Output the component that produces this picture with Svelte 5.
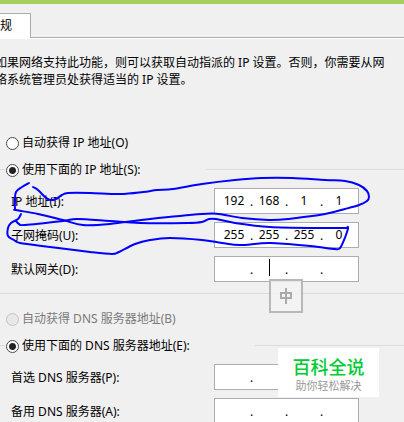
<script lang="ts">
  // TCP/IPv4 properties sheet: address and DNS groups, with pen marks drawn
  // over the address rows and the floating IME indicator.

  type Point = [number, number];

  interface AddressRow {
    id: string;
    label: string;
    octets: string[];
  }

  const addressRows: AddressRow[] = [
    { id: "ip", label: "IP 地址(I):", octets: ["192", "168", "1", "1"] },
    { id: "mask", label: "子网掩码(U):", octets: ["255", "255", "255", "0"] },
    { id: "gateway", label: "默认网关(D):", octets: ["", "", "", ""] },
  ];

  const dnsRows: AddressRow[] = [
    { id: "dns1", label: "首选 DNS 服务器(P):", octets: ["", "", "", ""] },
    { id: "dns2", label: "备用 DNS 服务器(A):", octets: ["", "", "", ""] },
  ];

  let ipMode = $state("manual");
  let dnsMode = $state("manual");

  const strokes: Point[][] = [
    [
      [29, 183], [22, 187], [16, 192], [15, 200], [15, 209], [16, 210],
      [38, 214], [63, 220], [83, 225], [110, 224], [150, 219], [202, 214],
      [219, 214], [242, 218], [269, 220], [289, 219], [312, 216], [325, 214],
      [345, 209], [359, 205], [367, 201], [369, 197], [367, 191], [359, 185],
      [345, 181], [325, 180], [292, 178], [262, 178], [235, 180], [202, 184],
      [173, 189], [157, 190], [143, 192], [120, 194], [90, 193], [68, 193],
      [62, 195], [56, 199], [50, 200], [45, 197], [38, 190], [33, 187],
    ],
    [
      [21, 214], [18, 219], [11, 223], [8, 228], [8, 236], [14, 240],
      [20, 243], [50, 247], [90, 252], [112, 254], [119, 252], [135, 244],
      [150, 240], [170, 238], [202, 240], [222, 243], [240, 245], [270, 243],
      [310, 246], [335, 249], [340, 248], [344, 240], [347, 232], [348, 227],
      [344, 228], [320, 228], [270, 227], [235, 223], [216, 219], [209, 219],
      [202, 222], [187, 223], [140, 223], [110, 221], [77, 219], [63, 221],
      [25, 225], [19, 224], [16, 221],
    ],
  ];

  // Catmull-Rom through the sampled pen points.
  function smooth(points: Point[]): string {
    let d = `M${points[0].join(" ")}`;
    for (let i = 0; i < points.length - 1; i++) {
      const a = points[i - 1] ?? points[i];
      const b = points[i];
      const c = points[i + 1];
      const e = points[i + 2] ?? c;
      d += `C${b[0] + (c[0] - a[0]) / 6} ${b[1] + (c[1] - a[1]) / 6}`;
      d += ` ${c[0] - (e[0] - b[0]) / 6} ${c[1] - (e[1] - b[1]) / 6} ${c[0]} ${c[1]}`;
    }
    return d;
  }
</script>

{#snippet addressRow(row: AddressRow)}
  <div class="row">
    <label for="{row.id}-0">{row.label}</label>
    <div class="address" role="group" aria-label={row.label}>
      {#each row.octets as octet, i}
        {#if i > 0}<span class="dot">.</span>{/if}
        <input id="{row.id}-{i}" type="text" maxlength="3" value={octet} aria-label="{row.label} {i + 1}" />
      {/each}
      {#if row.id === "gateway"}
        <span class="caret"></span>
        <span class="ime">
          <svg viewBox="0 0 30 30" aria-hidden="true">
            <path d="M10 12h10v5h-10zM15 7v16" />
          </svg>
        </span>
      {/if}
    </div>
  </div>
{/snippet}

<main>
  <div class="tabs" role="tablist">
    <button class="tab" role="tab" aria-selected="true">规</button>
  </div>

  <p class="intro">
    如果网络支持此功能，则可以获取自动指派的 IP 设置。否则，你需要从网<br />络系统管理员处获得适当的 IP 设置。
  </p>

  <section class="group">
    <label class="option">
      <input type="radio" name="ip" value="auto" bind:group={ipMode} />
      自动获得 IP 地址(O)
    </label>
    <div class="legend">
      <label class="option">
        <input type="radio" name="ip" value="manual" bind:group={ipMode} />
        使用下面的 IP 地址(S):
      </label>
    </div>
    <div class="rows">
      {#each addressRows as row (row.id)}
        {@render addressRow(row)}
      {/each}
    </div>
  </section>

  <section class="group dns">
    <label class="option disabled">
      <input type="radio" name="dns" value="auto" disabled bind:group={dnsMode} />
      自动获得 DNS 服务器地址(B)
    </label>
    <div class="legend">
      <label class="option">
        <input type="radio" name="dns" value="manual" bind:group={dnsMode} />
        使用下面的 DNS 服务器地址(E):
      </label>
    </div>
    <div class="rows">
      {#each dnsRows as row (row.id)}
        {@render addressRow(row)}
      {/each}
    </div>
  </section>

  <svg class="pen" width="404" height="422" aria-hidden="true">
    {#each strokes as points}
      <path d={smooth(points)} />
    {/each}
  </svg>

  <div class="brand">
    <strong>百科全说</strong>
    <span>助你轻松解决</span>
  </div>
</main>

<style>
  :global(body) {
    background: #f0f0f0;
    overflow: hidden;
  }
  main {
    position: relative;
    overflow: hidden;
    border-top: 4px solid #a2cf5e;
    background: #f0f0f0;
    color: #000;
    font-family: "Noto Sans", "Noto Sans CJK SC", sans-serif;
    font-size: 12px;
    line-height: 17px;
  }
  .tabs {
    display: flex;
    padding-top: 9px;
    border-bottom: 1px solid #acacac;
    box-shadow: 0 1px #fff;
  }
  .tab {
    width: 31px;
    height: 25px;
    margin-bottom: -1px;
    padding: 0 0 2px;
    border: 1px solid #acacac;
    border-width: 1px 1px 0 0;
    background: #fff;
    color: inherit;
    font: inherit;
    text-align: left;
  }
  /* The sheet runs past the left edge of the window. */
  .intro {
    margin: 16px 0 0 -5px;
    white-space: nowrap;
  }
  .group {
    padding-top: 45px;
    border-bottom: 1px solid #dcdcdc;
  }
  .dns {
    padding-top: 15px;
    border-bottom: none;
  }
  .option {
    display: flex;
    align-items: center;
    gap: 3px;
    width: max-content;
    height: 18px;
    padding-left: 6px;
    white-space: nowrap;
  }
  .option input {
    appearance: none;
    width: 13px;
    height: 13px;
    margin: 2px 0 0;
    border: 1px solid #4a4a4a;
    border-radius: 50%;
    background: #fff;
  }
  .option input:checked {
    background: radial-gradient(circle, #222 3px, #fff 4px);
  }
  .option input:disabled {
    border-color: #c3c3c3;
    background: #e8e8e8;
  }
  .disabled {
    color: #7a7a7a;
  }
  .legend {
    display: flex;
    align-items: center;
    margin-top: 9px;
  }
  .legend::before,
  .legend::after {
    content: "";
    height: 1px;
    background: #dcdcdc;
  }
  .legend::before {
    width: 5px;
  }
  .legend::after {
    flex: 1;
    margin-left: 65px;
  }
  .legend .option {
    padding-left: 1px;
  }
  .rows {
    display: flex;
    flex-direction: column;
    gap: 8px;
    padding: 10px 0 11px;
  }
  .row {
    display: grid;
    grid-template-columns: 203px 145px;
    align-items: center;
    padding-left: 11px;
  }
  .address {
    position: relative;
    display: flex;
    align-items: center;
    box-sizing: border-box;
    height: 26px;
    padding-left: 7px;
    border: 1px solid #abadb3;
    background: #fff;
  }
  .address input {
    width: 24px;
    height: 20px;
    padding: 0 0 2px;
    box-sizing: border-box;
    border: none;
    outline: none;
    background: none;
    color: inherit;
    font: inherit;
    text-align: center;
  }
  .dot {
    width: 11px;
    text-align: center;
  }
  .caret {
    position: absolute;
    top: 2px;
    left: 54px;
    width: 1px;
    height: 17px;
    background: #000;
  }
  .ime {
    position: absolute;
    z-index: 1;
    top: 22px;
    left: 54px;
    width: 30px;
    height: 30px;
    border: 2px solid #b8b8b8;
    background: rgba(244, 244, 244, 0.8);
  }
  .ime svg {
    display: block;
    fill: none;
    stroke: #aaa;
    stroke-width: 2;
  }
  .pen {
    position: absolute;
    top: -4px;
    left: 0;
    fill: none;
    stroke: #00f;
    stroke-width: 2;
    stroke-linecap: round;
    stroke-linejoin: round;
    pointer-events: none;
  }
  .brand {
    position: absolute;
    top: 344px;
    left: 278px;
    display: flex;
    flex-direction: column;
    align-items: center;
    gap: 1px;
    box-sizing: border-box;
    width: 101px;
    height: 49px;
    padding-top: 8px;
    background: #fff;
  }
  .brand strong {
    color: #0c3;
    font-size: 18px;
    font-weight: 500;
    line-height: 22px;
  }
  .brand span {
    color: #999;
    font-size: 11px;
    line-height: 13px;
  }
</style>
